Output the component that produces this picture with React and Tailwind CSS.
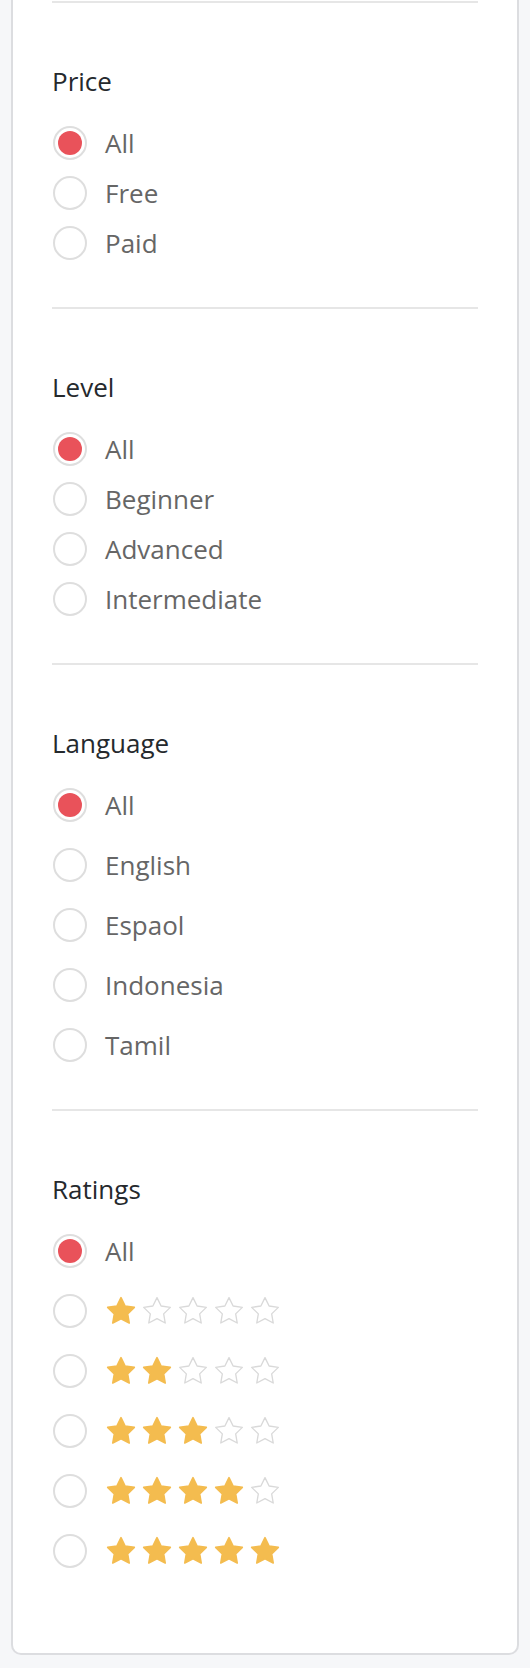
import { useState } from 'react'

const SECTIONS = [
  { key: 'price', title: 'Price', options: ['All', 'Free', 'Paid'], spaced: false },
  { key: 'level', title: 'Level', options: ['All', 'Beginner', 'Advanced', 'Intermediate'], spaced: false },
  { key: 'language', title: 'Language', options: ['All', 'English', 'Espaol', 'Indonesia', 'Tamil'], spaced: true },
]

const STAR = '12 2 15.09 8.26 22 9.27 17 14.14 18.18 21.02 12 17.77 5.82 21.02 7 14.14 2 9.27 8.91 8.26'

function Star({ filled }) {
  return (
    <svg width="32" height="32" viewBox="0 0 24 24" className="block">
      <polygon
        points={STAR}
        fill={filled ? '#f4bc4f' : 'none'}
        stroke={filled ? '#f4bc4f' : '#d9d9d9'}
        strokeWidth={filled ? 1.2 : 1}
        strokeLinejoin="round"
      />
    </svg>
  )
}

function Radio({ checked, onClick, children }) {
  return (
    <button type="button" onClick={onClick} className="flex items-center gap-[18px] h-[50px] text-left">
      <span className="ml-[1px] w-[34px] h-[34px] rounded-full border-2 border-[#dedede] flex items-center justify-center shrink-0">
        {checked && <span className="w-[24px] h-[24px] rounded-full bg-[#e9525a]" />}
      </span>
      {children}
    </button>
  )
}

function Section({ title, spaced, last, children }) {
  return (
    <div>
      <div className="h-[2px] bg-[#e6e6e6]" />
      <h3 className="mt-[61px] text-[26px] leading-[34px] font-normal text-[#25292d]">{title}</h3>
      <div className={`mt-[20px] flex flex-col ${spaced ? 'gap-[10px]' : ''} ${last ? 'pb-[77px]' : 'pb-[39px]'}`}>
        {children}
      </div>
    </div>
  )
}

export default function App() {
  const [picked, setPicked] = useState({ price: 'All', level: 'All', language: 'All', rating: 0 })
  const set = (k, v) => setPicked(p => ({ ...p, [k]: v }))

  return (
    <div className="min-h-[1668px] bg-[#f6f7f9] px-[11px]" style={{ fontFamily: '"Open Sans", "Noto Sans", sans-serif' }}>
      <div className="bg-white border-2 border-t-0 border-[#dcdde0] rounded-b-[10px] px-[39px] pt-[1px]">
        {SECTIONS.map(s => (
          <Section key={s.key} title={s.title} spaced={s.spaced}>
            {s.options.map(o => (
              <Radio key={o} checked={picked[s.key] === o} onClick={() => set(s.key, o)}>
                <span className="text-[26px] leading-[34px] text-[#666666]">{o}</span>
              </Radio>
            ))}
          </Section>
        ))}

        <Section title="Ratings" spaced last>
          <Radio checked={picked.rating === 0} onClick={() => set('rating', 0)}>
            <span className="text-[26px] leading-[34px] text-[#666666]">All</span>
          </Radio>
          {[1, 2, 3, 4, 5].map(n => (
            <Radio key={n} checked={picked.rating === n} onClick={() => set('rating', n)}>
              <span className="flex gap-[4px]">
                {[1, 2, 3, 4, 5].map(i => <Star key={i} filled={i <= n} />)}
              </span>
            </Radio>
          ))}
        </Section>
      </div>
    </div>
  )
}
